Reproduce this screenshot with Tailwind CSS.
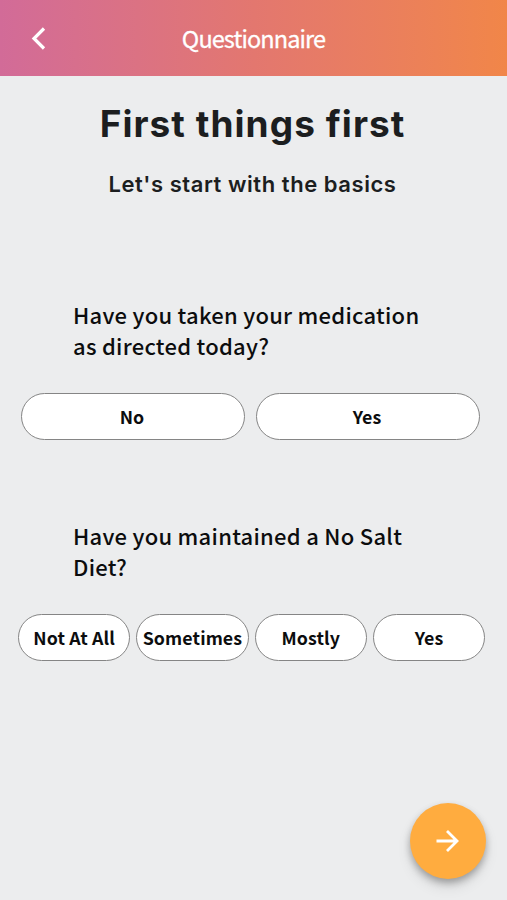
<!DOCTYPE html>
<html lang="en">
<head>
<meta charset="utf-8">
<title>Questionnaire</title>
<script src="https://cdn.jsdelivr.net/npm/@tailwindcss/browser@4"></script>
</head>
<body class="relative flex h-[900px] w-[507px] flex-col overflow-hidden bg-[#ecedee] font-['Noto_Sans_CJK_SC',sans-serif] text-[#0c0d0e]">
<header class="grid h-[76px] shrink-0 grid-cols-[76px_1fr_76px] items-center bg-linear-to-r from-[#d26b98] via-[#e3776f] to-[#f18648]">
  <button aria-label="Back" class="flex h-full items-center justify-center">
    <svg class="h-6 w-4" viewBox="0 0 16 24" fill="none" stroke="#fff" stroke-width="3.2"><path d="M14 2.5 4 12.5 14 22.5"/></svg>
  </button>
  <h1 class="text-center text-[23.5px] leading-[36px] tracking-[-0.9px] text-white [-webkit-text-stroke:0.3px_white]">Questionnaire</h1>
</header>
<main class="flex flex-col">
  <div class="flex flex-col items-center font-[Inter,sans-serif] whitespace-nowrap text-[#1c1e1f]">
    <h2 class="mt-[24px] mr-[2px] text-[37px] leading-[48px] font-bold tracking-[1.05px]">First things first</h2>
    <p class="mt-[20px] mr-[2px] text-[22px] leading-[32px] font-semibold tracking-[0.55px]">Let's start with the basics</p>
  </div>
  <section class="mt-[99px]">
    <p class="ml-[73px] text-[22px] leading-[31px] font-medium tracking-[0.27px] whitespace-nowrap">Have you taken your medication<br>as directed today?</p>
    <div class="mt-[32px] ml-[21px] flex gap-[11px] text-[17.8px] leading-[27px] font-bold tracking-[0.1px]">
      <button class="h-[47px] w-[224px] rounded-full border border-[#858585] bg-white pr-0.5">No</button>
      <button class="h-[47px] w-[224px] rounded-full border border-[#858585] bg-white pr-0.5">Yes</button>
    </div>
  </section>
  <section class="mt-[80px]">
    <p class="ml-[73px] text-[22px] leading-[31px] font-medium tracking-[0.27px] whitespace-nowrap">Have you maintained a No Salt<br>Diet?</p>
    <div class="mt-[32px] ml-[18px] flex gap-[6px] text-[17.8px] leading-[27px] font-bold tracking-[0.1px] whitespace-nowrap">
      <button class="h-[47px] w-[112.3px] rounded-full border border-[#858585] bg-white">Not At All</button>
      <button class="h-[47px] w-[112.3px] rounded-full border border-[#858585] bg-white">Sometimes</button>
      <button class="h-[47px] w-[112.3px] rounded-full border border-[#858585] bg-white">Mostly</button>
      <button class="h-[47px] w-[112.3px] rounded-full border border-[#858585] bg-white">Yes</button>
    </div>
  </section>
</main>
<button aria-label="Next" class="absolute right-[21px] bottom-[21px] flex size-[76px] items-center justify-center rounded-full bg-[#ffac3f] shadow-[0_4px_7px_rgba(0,0,0,0.28),0_8px_14px_rgba(0,0,0,0.1)]">
  <svg class="size-6" viewBox="0 0 24 24" fill="none" stroke="#fff" stroke-width="2.8"><path d="M0.5 12H21M11 2 21 12 11 22"/></svg>
</button>
</body>
</html>
